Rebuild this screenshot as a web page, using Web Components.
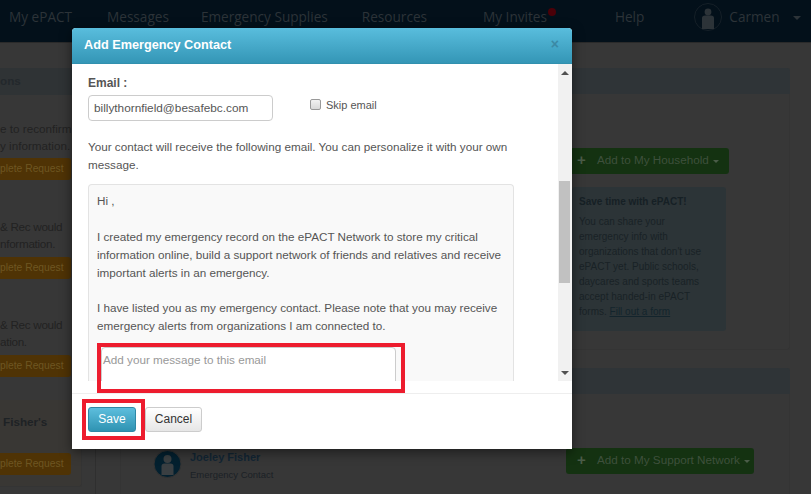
<!DOCTYPE html>
<html><head><meta charset="utf-8"><style>
html,body{margin:0;padding:0;width:811px;height:494px;overflow:hidden;background:#373737;font-family:"Liberation Sans",Arial,sans-serif}
</style></head><body>
<epact-page></epact-page>
<script>
function def(name, html){
  customElements.define(name, class extends HTMLElement{
    constructor(){super();this.attachShadow({mode:'open'}).innerHTML=html;}
  });
}
def('nav-bar',`<style>
:host{display:flex;height:42px;background:#03101a;border-bottom:1px solid #2a2a2a;font:13.600px "Open Sans",sans-serif;color:#2c3338;align-items:center;white-space:nowrap}
span{line-height:18px;margin-top:-8px}
i{width:8px;height:8px;border-radius:50%;background:#4a0008;margin-top:-18px}
b{border:4px solid transparent;border-top-color:#2c3338;border-bottom:0;margin:-6px 0 0 13px}
svg{margin:-8px 7px 0 0}
</style>
<span style="margin-left:9px">My ePACT</span><span style="margin-left:35px">Messages</span><span style="margin-left:32px">Emergency Supplies</span><span style="margin-left:34px">Resources</span><span style="margin-left:56px">My Invites</span><i style="margin-left:1px"></i><span style="margin-left:59px">Help</span>
<svg style="margin-left:50px" width="28" height="28" viewBox="0 0 28 28"><circle cx="14" cy="14" r="13.500" fill="#03101a" stroke="#162028"/><circle cx="14" cy="9" r="3.400" fill="#2c3338"/><path d="M8 15q0-2.500 3-2.500h6q3 0 3 2.500v11h-12z" fill="#2c3338"/></svg>
<span>Carmen</span><b></b>`);
def('side-panel',`<style>
:host{display:block;flex:none;width:96px;height:451px;box-sizing:border-box;border-right:1px solid #2f2f2f;font:11.700px/17px "Liberation Sans",sans-serif;color:#222;overflow:hidden}
.head{margin-top:25px;height:27px;background:#2f3335;font-weight:bold;line-height:26px;color:#23282c;white-space:nowrap}
.t{white-space:nowrap;height:34px}
.n{letter-spacing:-.3px}
.b{width:71px;height:22px;border-radius:0 3px 3px 0;background:#4f3305;color:#6e5622;font-size:10.300px;line-height:22px;text-align:right;padding-right:9px;box-sizing:border-box;white-space:nowrap}
.card{width:82px;margin-top:23px;padding:12px 0 11px;border:solid #343434;border-width:0 1px 1px 0;border-radius:0 0 3px 0;background:#393734;box-sizing:border-box}
.name{font-weight:bold;color:#1e2225;height:20px;line-height:20px;padding-left:3px}
</style>
<div class="head">ons</div>
<div class="t" style="margin-top:25px">e to reconfirm<br>y information.</div>
<div class="b" style="margin-top:4px">plete Request</div>
<div class="t n" style="margin-top:38px">&amp; Rec would<br>nformation.</div>
<div class="b" style="margin-top:5px">plete Request</div>
<div class="t n" style="margin-top:37px">&amp; Rec would<br>ation.</div>
<div class="b" style="margin-top:5px">plete Request</div>
<div class="card"><div class="name">Fisher's</div><div class="b" style="margin-top:21px">plete Request</div></div>`);
def('green-btn',`<style>
:host{display:inline-flex;align-items:center;height:26px;background:#143211;border-radius:3px;color:#3e503c;font:11.700px/24px "Liberation Sans",sans-serif;white-space:nowrap;padding:0 4px 2px 11px;box-sizing:border-box}
.p{font-weight:bold;font-size:15px;width:20px;color:#4a5c48}
b{margin:2px 0 0 4px;border:3px solid transparent;border-top-color:#4a5c48;border-bottom:0}
</style><span class="p">+</span><slot></slot><b></b>`);
def('panel-section',`<style>
:host{display:block;width:670px;box-sizing:border-box;border:1px solid #343434;border-top:0;border-radius:3px}
.hd{height:26px;background:#2f3437;border-radius:3px 3px 0 0;margin:0 -1px}
</style><div class="hd"></div><slot></slot>`);
def('main-panel',`<style>
:host{display:block;flex:none;width:670px;height:451px;font:10px/15px "Liberation Sans",sans-serif;color:#1f282d;overflow:hidden}
.s1{margin-top:25px;height:282px}
.s2{margin-top:18px;height:150px}
.btn1{margin:54px 0 0 445px}
.info{margin:13px 0 0 451px;width:154px;height:144px;background:#2c3437;border-radius:3px;box-sizing:border-box;padding:7px;color:#192226}
.info b{display:block;margin-bottom:5px;color:#162025}
u{color:#13242c}
.row{display:flex;align-items:flex-start;padding-top:54px}
.person{display:flex;gap:8px;width:445px;box-sizing:border-box;padding:2px 0 0 32px;font-size:9.500px;line-height:14px;color:#1b2126}
.person strong{display:block;font:bold 11px/16px "Liberation Sans",sans-serif;color:#122533;margin:-1px 0 3px}
</style>
<panel-section class="s1"><green-btn class="btn1" style="display:flex;width:163px">Add to My Household</green-btn>
<div class="info"><b>Save time with ePACT!</b>You can share your<br>emergency info with<br>organizations that don't use<br>ePACT yet. Public schools,<br>daycares and sports teams<br>accept handed-in ePACT<br>forms. <u>Fill out a form</u></div></panel-section>
<panel-section class="s2"><div class="row"><div class="person"><svg width="29" height="28" viewBox="0 0 29 28"><circle cx="14.500" cy="14" r="13.500" fill="#03202f" stroke="#333"/><circle cx="14.500" cy="9" r="4" fill="#3a3f42"/><path d="M8.500 16q0-2.500 3-2.500h6q3 0 3 2.500v9h-12z" fill="#3a3f42"/></svg><div><strong>Joeley Fisher</strong>Emergency Contact</div></div><green-btn>Add to My Support Network</green-btn></div></panel-section>`);
def('check-box',`<style>
:host{display:block;flex:none;width:11px;height:11px;box-sizing:border-box;border:1px solid #999;border-radius:2px;background:linear-gradient(#f2f2f2,#d9d9d9);margin-top:3px}
</style>`);
def('contact-modal',`<style>
:host{display:block;position:absolute;left:72px;top:28px;width:500px;height:421px;background:#fff;border-radius:4px 4px 0 0;box-shadow:0 3px 12px rgba(0,0,0,.5);font:11.700px/18px "Liberation Sans",sans-serif;color:#555}
header{height:36px;box-sizing:border-box;display:flex;justify-content:space-between;padding:0 13px 0 12px;background:linear-gradient(#59bddd,#3496b6);border-radius:4px 4px 0 0;color:#fff;font:bold 12.700px/34px "Liberation Sans",sans-serif;border-bottom:1px solid #3190ae}
.x{font:bold 14px/32px "Liberation Sans",sans-serif;color:#3b89a5}
.body{display:flex;height:317px;overflow:hidden}
.scroll{width:486px;padding-left:16px;box-sizing:border-box;overflow:hidden}
.bar{width:14px;background:#f1f1f1;position:relative;flex:none}
.thumb{position:absolute;left:1px;right:2px;top:117px;height:102px;background:#c1c1c1}
.ua,.da{position:absolute;left:3px;border:4px solid transparent}
.ua{top:7px;border-top:0;border-bottom-color:#505050}
.da{bottom:6px;border-bottom:0;border-top-color:#505050}
label{display:block;font-weight:bold;margin-top:10px;height:18px;font-size:12px}
.row{display:flex;align-items:flex-start;margin-top:3px}
.inp{width:185px;height:26px;box-sizing:border-box;border:1px solid #ccc;border-radius:4px;padding:0 5px;line-height:25px;font-size:11.800px}
.skip{display:flex;align-items:flex-start;gap:5px;margin:1px 0 0 37px;font-size:11px}
p{margin:17px 0 0;width:425px}
.well{margin-top:10px;width:426px;height:197px;box-sizing:border-box;background:#f9f9f9;border:1px solid #e3e3e3;border-bottom:0;border-radius:4px 4px 0 0;padding:7px 8px;position:relative;overflow:hidden}
.well div{margin-bottom:18px}
.well div.b{margin-bottom:17px}
.well div.ta{position:absolute;left:12px;top:162px;width:295px;height:40px;box-sizing:border-box;background:#fff;border:1px solid #ccc;border-radius:4px;padding:3px 1px;color:#999;margin:0}
.r1{position:absolute;left:25px;top:315px;width:308px;height:50px;box-sizing:border-box;border:4px solid #ed1c2e}
footer{height:56px;box-sizing:border-box;border-top:1px solid #eee;padding:13px 16px 0;display:flex;gap:9px;margin-top:12px;align-items:flex-start}
.btn{height:25px;width:48px;box-sizing:border-box;border-radius:3px;text-align:center;line-height:23px;font-size:12px}
.save{background:linear-gradient(#5dbedd,#2f93b2);border:1px solid #2d88a6;color:#fff}
.cancel{width:57px;background:linear-gradient(#fff,#e6e6e6);border:1px solid #ccc;color:#333}
.r2{position:absolute;left:10px;top:371px;width:63px;height:41px;box-sizing:border-box;border:4px solid #ed1c2e}
</style>
<header>Add Emergency Contact<span class="x">×</span></header>
<div class="body"><div class="scroll">
<label>Email :</label>
<div class="row"><div class="inp">billythornfield@besafebc.com</div><div class="skip"><check-box></check-box>Skip email</div></div>
<p>Your contact will receive the following email. You can personalize it with your own message.</p>
<div class="well">
<div>Hi ,</div>
<div class="b">I created my emergency record on the ePACT Network to store my critical information online, build a support network of friends and relatives and receive important alerts in an emergency.</div>
<div>I have listed you as my emergency contact. Please note that you may receive emergency alerts from organizations I am connected to.</div>
<div class="ta">Add your message to this email</div>
</div>
</div><div class="bar"><div class="ua"></div><div class="thumb"></div><div class="da"></div></div></div>
<footer><div class="btn save">Save</div><div class="btn cancel">Cancel</div></footer>
<div class="r1"></div><div class="r2"></div>`);
def('epact-page',`<style>
:host{display:block;width:811px;height:494px;position:relative;overflow:hidden;background:#373737}
.wrap{display:flex;gap:24px}
</style>
<nav-bar></nav-bar>
<div class="wrap"><side-panel></side-panel><main-panel></main-panel></div>
<contact-modal></contact-modal>`);
</script>
</body></html>
